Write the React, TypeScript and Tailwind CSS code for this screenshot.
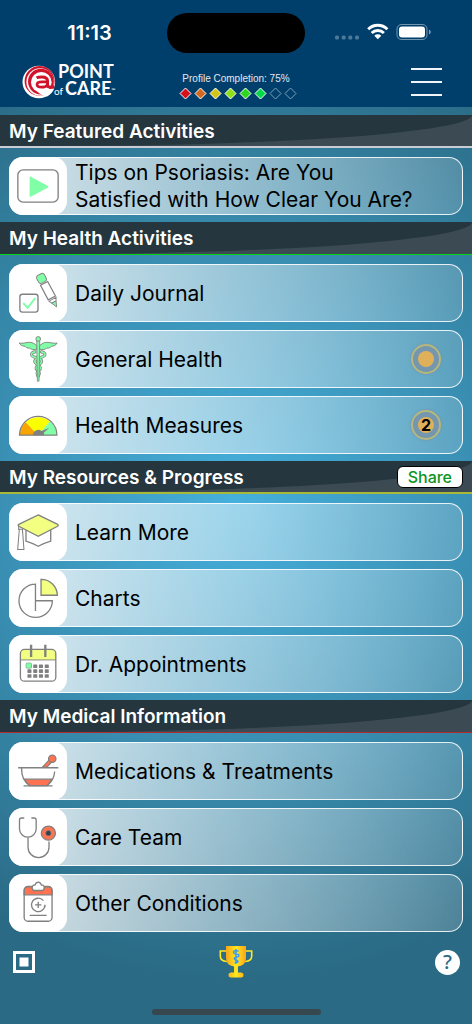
import React from 'react';

type Item = {
	label: string;
	icon: React.ReactNode;
	badge?: string;
};

type Section = {
	title: string;
	line: string;
	share?: boolean;
	items: Item[];
};

const GRAY = '#808080';
const GREEN = '#80ffa6';
const YELLOW = '#f3ff80';
const RED = '#ff7350';

function Icon({ children }: { children: React.ReactNode }) {
	return (
		<svg viewBox="0 0 57 57" className="size-full" fill="none" stroke={GRAY} strokeWidth="1.3" aria-hidden="true">
			{children}
		</svg>
	);
}

const PlayIcon = (
	<Icon>
		<rect x="8.7" y="12.7" width="39.6" height="31.6" rx="5" />
		<path d="M21 20v18.500l17-9.250z" fill={GREEN} stroke={GREEN} strokeWidth="1.500" strokeLinejoin="round" />
	</Icon>
);

const JournalIcon = (
	<Icon>
		<rect x="10.7" y="29.7" width="17.800" height="17.600" rx="2.500" />
		<path d="M14 38.500l4.300 4.500 7.500-9.500" stroke={GREEN} strokeWidth="1.900" />
		<g transform="translate(29.700 10.500) rotate(-28)">
			<rect x="-4" y="0" width="8.500" height="8.500" rx="2.500" fill={GREEN} stroke={GRAY} strokeWidth="0.9" />
			<path d="M-3.800 9.800h8v16.200h-8z" strokeWidth="1.200" />
			<path d="M-3.800 27.500l1.500 3h4.800l1.700-3z" strokeWidth="0.9" />
			<path d="M-2.300 30.500h4.800L.2 36z" fill={GREEN} strokeWidth="0.8" />
		</g>
	</Icon>
);

// snakes are drawn twice: gray outline first, green on top
const SNAKE_LEFT = 'M25.500 21.500c-5 .8-4.500 4.500 1 5.500 5.500 1.300 7.500 3.800 3.300 6.700-3.800 2.500-4.300 4-1.500 6.200 2.200 2 1.800 3.500 0 5.200';
const SNAKE_RIGHT = 'M31.900 21.500c5 .8 4.500 4.500-1 5.500-5.500 1.300-7.500 3.800-3.300 6.700 3.800 2.500 4.300 4 1.500 6.200-2.200 2-1.800 3.500 0 5.200';

const CaduceusIcon = (
	<Icon>
		<g fill={GREEN} strokeWidth="0.9" strokeLinejoin="round">
			<path d="M27.500 18.800c-3 1-5.800.3-7.300-1-2.200.2-3.700-.7-4.500-1.800-2.400-.1-4.500-1-5.600-3.200 3.500.9 6.800-.8 10.400-.7 3.400.1 5 2 7 3.300z" />
			<path d="M29.900 18.800c3 1 5.800.3 7.300-1 2.200.2 3.700-.7 4.500-1.800 2.400-.1 4.500-1 5.600-3.200-3.500.9-6.800-.8-10.400-.7-3.400.1-5 2-7 3.300z" />
		</g>
		<g strokeLinecap="round" strokeLinejoin="round">
			<path d={SNAKE_LEFT} strokeWidth="3" />
			<path d={SNAKE_RIGHT} strokeWidth="3" />
			<path d={SNAKE_LEFT} stroke={GREEN} strokeWidth="1.500" />
			<path d={SNAKE_RIGHT} stroke={GREEN} strokeWidth="1.500" />
		</g>
		<path d="M27.200 10h3l-.7 40.300h-1.600z" fill={GREEN} strokeWidth="0.8" />
		<circle cx="28.700" cy="8.800" r="2.300" fill={GREEN} strokeWidth="0.9" />
	</Icon>
);

const GaugeIcon = (
	<Icon>
		<path d="M28.700 38.500H10.500a18.200 18.200 0 0 1 5.900-12.900z" fill="#faa400" stroke="none" />
		<path d="M28.700 38.500L16.400 25.600a18.200 18.200 0 0 1 23.800-.7z" fill="#faff00" stroke="none" />
		<path d="M28.700 38.500l11.500-13.600a18.200 18.200 0 0 1 6.700 13.600z" fill={GREEN} stroke="none" />
		<path d="M10.300 38.500a18.400 18.400 0 0 1 36.800 0z" strokeWidth="1.200" />
		<path d="M23.500 38.500a5.200 5.200 0 0 1 8.500-4l7.700-3.200-5.500 4.800.4 2.400z" fill={GRAY} stroke="none" />
	</Icon>
);

const GraduationIcon = (
	<Icon>
		<path d="M16.700 25v12.500q5.500 1.700 12 5 6.500-3.300 12.300-5V25" />
		<path d="M28.700 11.700l18.600 9q2.200 1.200 0 2.400l-18.600 9.600-18.600-9.600q-2.200-1.200 0-2.400z" fill={YELLOW} />
		<path d="M9.500 22.500v4M13.300 25.500v4M10.200 25.500L8.500 45.800h6.200L13.200 25.800z" strokeWidth="1" />
	</Icon>
);

const ChartIcon = (
	<Icon>
		<path d="M26 14.800A16.400 16.400 0 1 0 42.600 31.200H26M26 14.200v27" />
		<path d="M31.500 10.200v15.600h16a15.800 15.800 0 0 0-16-15.600z" fill={YELLOW} />
	</Icon>
);

const CalendarIcon = (
	<Icon>
		<path d="M11.200 24.500V18a4 4 0 0 1 4-4h26.700a4 4 0 0 1 4 4v6.500z" fill={YELLOW} stroke="none" />
		<rect x="11.200" y="14.200" width="34.800" height="31.200" rx="4" />
		<path d="M11.200 24.500H46" strokeWidth="0.9" />
		<path d="M21.700 9.500v12M35.700 9.500v12" strokeWidth="2.300" />
		{[30.7, 35.5, 40.3].map((y) =>
			[20, 25.7, 31.3, 37].map((x) => (
				<rect key={`${x}-${y}`} x={x - 1.900} y={y - 1.800} width="4" height="3.600" rx="0.600" fill={GRAY} stroke="none" />
			))
		)}
		<rect x="16.700" y="27.500" width="5.400" height="5.200" rx="1" fill={GREEN} stroke={GRAY} strokeWidth="0.500" />
	</Icon>
);

const MortarIcon = (
	<Icon>
		<path d="M33 24.500l7-7.500 2.500 2.200-5 5.300z" fill={RED} strokeWidth="1" />
		<circle cx="42.500" cy="16.500" r="3.600" fill={RED} />
		<path d="M15.500 36.500h26.600q-2 4-4.500 6.300H20q-3-2.300-4.500-6.300z" fill={RED} />
		<path d="M9 25.300h39.500M12.300 25.500q0 12.500 8 17M44.900 29q-.8 9.500-7.600 13.700M14.300 43.200h28.500" />
	</Icon>
);

const StethoscopeIcon = (
	<Icon>
		<path d="M15 9.800h-2.700q-2 0-2 2v8.700a8.200 8.200 0 0 0 16.400 0v-8.700q0-2-2-2H22" />
		<path d="M18.700 29v9.500a10.300 10.300 0 0 0 20.600 0v-5.700" />
		<circle cx="38.700" cy="24.700" r="6.900" fill={RED} />
		<circle cx="38.700" cy="24.700" r="2.600" fill="#34424a" strokeWidth="0.6" />
	</Icon>
);

const ClipboardIcon = (
	<Icon>
		<path d="M14.900 20.500V16a3.700 3.700 0 0 1 3.700-3.700h20a3.700 3.700 0 0 1 3.700 3.700v4.500z" fill={RED} />
		<rect x="14.900" y="12.400" width="27.400" height="34" rx="3.700" />
		<path d="M24 16.200q-2.500-2.700 0-5.300h1.500q1-2.900 3.200-2.900t3.200 2.900h1.500q2.500 2.600 0 5.300z" fill="#fff" />
		<path d="M33.800 26.200a6.600 6.600 0 1 0 1.500 4.100v2.400M28.700 27.200v6.200M25.600 30.300h6.200M20.300 40.700H37" />
	</Icon>
);

const sections: Section[] = [
	{
		title: 'My Featured Activities',
		line: 'border-b-2 border-[#c9ccd4]',
		items: [{ label: 'Tips on Psoriasis: Are You Satisfied with How Clear You Are?', icon: PlayIcon }],
	},
	{
		title: 'My Health Activities',
		line: 'border-b border-[#00d414]',
		items: [
			{ label: 'Daily Journal', icon: JournalIcon },
			{ label: 'General Health', icon: CaduceusIcon, badge: '' },
			{ label: 'Health Measures', icon: GaugeIcon, badge: '2' },
		],
	},
	{
		title: 'My Resources & Progress',
		line: 'border-b-2 border-[#a9b838]',
		share: true,
		items: [
			{ label: 'Learn More', icon: GraduationIcon },
			{ label: 'Charts', icon: ChartIcon },
			{ label: 'Dr. Appointments', icon: CalendarIcon },
		],
	},
	{
		title: 'My Medical Information',
		line: 'border-b border-[#b02c30]',
		items: [
			{ label: 'Medications & Treatments', icon: MortarIcon },
			{ label: 'Care Team', icon: StethoscopeIcon },
			{ label: 'Other Conditions', icon: ClipboardIcon },
		],
	},
];

// six steps done, two left
const steps = ['#d8101c', '#d2691e', '#d4c414', '#8ee014', '#2cd81c', '#00d848', 'none', 'none'];

function StatusBar() {
	return (
		<div className="grid grid-cols-[1fr_auto_1fr] items-center pt-[13px]">
			<div className="pl-3 text-center text-[20px] font-semibold">11:13</div>
			<div className="h-10 w-[138px] rounded-full bg-black" />
			<svg viewBox="0 0 100 20" className="ml-7 h-5 w-[100px]" aria-hidden="true">
				<g fill="#fff" opacity="0.3">
					<rect x="2" y="12.500" width="4" height="4" rx="1.500" />
					<rect x="8.700" y="12.500" width="4" height="4" rx="1.500" />
					<rect x="15.300" y="12.500" width="4" height="4" rx="1.500" />
					<rect x="22" y="12.500" width="4" height="4" rx="1.500" />
				</g>
				<g stroke="#fff" fill="none" strokeWidth="2.900">
					<path d="M35.200 6.200a13.700 13.700 0 0 1 19.200 0" />
					<path d="M38.700 10a8.700 8.700 0 0 1 12.200 0" />
				</g>
				<path d="M41.300 12.800a4.900 4.900 0 0 1 7 0l-3.500 3.500z" fill="#fff" />
				<rect x="64" y="1.500" width="30" height="15" rx="4.500" fill="none" stroke="#fff" opacity="0.45" />
				<rect x="66" y="3.500" width="26" height="11" rx="3" fill="#fff" />
				<path d="M96 6.700v4.600q1.800-.6 1.800-2.300T96 6.700z" fill="#fff" opacity="0.5" />
			</svg>
		</div>
	);
}

function Logo() {
	return (
		<a href="#" aria-label="@Point of Care" className="flex items-center">
			<svg viewBox="0 0 34 34" className="size-[34px] shrink-0" aria-hidden="true">
				<circle cx="16.800" cy="17" r="16.300" fill="#fff" />
				<circle cx="17.600" cy="16" r="15" fill="#d0142c" />
				<circle cx="18.100" cy="17" r="13.700" fill="#fff" />
				<circle cx="18.900" cy="16.600" r="12.900" fill="#d0142c" />
				<circle cx="19.300" cy="17.300" r="10.300" fill="#fff" />
				<path d="M22 24h10q-2 5-7 7.500-5-1-9-4z" fill="#fff" />
				<g fill="none" stroke="#d0142c">
					<path d="M14.500 12.800q1.500-.8 5.500-.8 5.500 0 5.500 4v4q0 2 2.300 2h4.500" strokeWidth="3" />
					<path d="M25 16.900h-5q-5 0-5 2.600 0 2.700 4.500 2.700 4.500 0 6-2.500" strokeWidth="2.700" />
				</g>
			</svg>
			<span className="flex flex-col font-['Lato',sans-serif] text-[18px] leading-[17px] font-bold">
				<span className="pl-[2px]">POINT</span>
				<span className="flex items-baseline">
					<span className="-ml-[2px] text-[10px] font-normal">of</span>
					<span className="pl-[2px]">CARE</span>
					<span className="self-center text-[5px] leading-none">™</span>
				</span>
			</span>
		</a>
	);
}

function Header() {
	return (
		<header className="bg-[#003f6b] text-white">
			<StatusBar />
			<div className="grid grid-cols-[1fr_auto_1fr] items-center px-[22px] pt-[10px] pb-[7px]">
				<Logo />
				<div className="flex flex-col items-center gap-[2px] pt-[10px] font-['Liberation_Sans',sans-serif]">
					<p className="text-[10px] leading-3 text-slate-200">Profile Completion: 75%</p>
					<div className="flex gap-[2px] pl-1">
						{steps.map((fill, i) => (
							<svg key={i} viewBox="0 0 13 13" className="size-[13px]" aria-hidden="true">
								<path d="M6.500 1l5.500 5.500-5.500 5.500L1 6.500z" fill={fill} stroke={fill === 'none' ? '#7f9fb8' : '#fff'} />
							</svg>
						))}
					</div>
				</div>
				<button aria-label="Menu" className="mr-2 flex flex-col gap-[11px] justify-self-end">
					<span className="h-[2px] w-[31px] bg-slate-100" />
					<span className="h-[2px] w-[31px] bg-slate-100" />
					<span className="h-[2px] w-[31px] bg-slate-100" />
				</button>
			</div>
		</header>
	);
}

function SectionBar({ title, line, share }: Omit<Section, 'items'>) {
	return (
		<div className={`relative flex h-[33px] items-center justify-between bg-[#3c4b53] px-[9px] ${line}`}>
			<div className="absolute inset-0 rounded-br-[90%_100%] bg-[#25363e]" />
			<h2 className="relative pt-[2px] text-[19px] leading-6 font-semibold text-white">{title}</h2>
			{share && (
				<button className="relative h-[22px] rounded-md border border-black bg-white px-[10px] text-[16px] leading-5 font-medium text-[#0c9420]">
					Share
				</button>
			)}
		</div>
	);
}

function Badge({ text }: { text: string }) {
	return (
		<span className="mr-[21px] flex size-[30px] shrink-0 items-center justify-center rounded-full border-2 border-[#b4b87c] bg-[#7496ae] shadow-[0_0_3px_#7a8fa8]">
			<span className="flex size-4 items-center justify-center rounded-full bg-[#dfb05a] text-[16px] font-bold text-black">{text}</span>
		</span>
	);
}

function ItemCard({ item }: { item: Item }) {
	return (
		<button className="flex h-[58px] w-full items-center rounded-[14px] border border-white/85 bg-[linear-gradient(97deg,rgba(255,255,255,0.73)_12%,rgba(255,255,255,0.48)_50%,rgba(255,255,255,0.17)_100%)] text-left">
			<span className="-my-px -ml-px size-[58px] shrink-0 rounded-[14px] bg-white">{item.icon}</span>
			<span className="flex-1 pr-10 pl-2 text-[21px] leading-[27px] text-black">{item.label}</span>
			{item.badge !== undefined && <Badge text={item.badge} />}
		</button>
	);
}

function Footer() {
	return (
		<footer className="grid grid-cols-3 items-center px-3 pt-[6px]">
			<button aria-label="Expand" className="size-6 justify-self-start">
				<svg viewBox="0 0 24 24" fill="none" aria-hidden="true">
					<rect x="2.500" y="2.500" width="19" height="19" stroke="#fff" strokeWidth="3" />
					<rect x="7.500" y="7.500" width="9" height="9" fill="#fff" />
				</svg>
			</button>
			<button aria-label="Awards" className="h-[34px] w-9 justify-self-center">
				<svg viewBox="0 0 36 34" fill="none" aria-hidden="true">
					<defs>
						<linearGradient id="gold">
							<stop offset="0" stopColor="#fba31c" />
							<stop offset="0.5" stopColor="#ffe81c" />
							<stop offset="1" stopColor="#fba31c" />
						</linearGradient>
					</defs>
					<path d="M8 6H2.300v5q0 5 6.500 5.500M28 6h5.700v5q0 5-6.500 5.500" stroke="#ffe81c" strokeWidth="1.600" />
					<path d="M8 1h20v12q0 7.500-8 8.500v6h3q2.500 0 2.500 2.500 0 2.500-2.500 2.500H13q-2.500 0-2.500-2.500 0-2.500 2.500-2.500h3v-6q-8-1-8-8.500z" fill="url(#gold)" />
					<path d="M18 4v15M20.500 6q-5-1-5 1t5 2.500q1.500 2-2.500 2.700-3 .8-1 2.500 3 .5 3 2-.5 1.300-3.500.8" stroke="#3c9cf0" strokeWidth="1.500" />
				</svg>
			</button>
			<button aria-label="Help" className="flex size-[25px] items-center justify-center justify-self-end rounded-full bg-white font-['Noto_Sans',sans-serif] text-[20px] leading-none font-medium text-[#2b6b85]">
				?
			</button>
		</footer>
	);
}

export default function App() {
	return (
		<div className="flex min-h-screen flex-col font-['Inter',sans-serif]">
			<Header />
			<main className="flex flex-1 flex-col bg-[radial-gradient(circle_480px_at_50%_43%,#45b0dc_0%,#3a91b5_48%,#2a6a84_100%)] pt-2">
				{sections.map((section) => (
					<section key={section.title}>
						<SectionBar title={section.title} line={section.line} share={section.share} />
						<div className="flex flex-col gap-2 px-[9px] pt-[9px] pb-[7px]">
							{section.items.map((item) => (
								<ItemCard key={item.label} item={item} />
							))}
						</div>
					</section>
				))}
				<Footer />
				<div className="mx-auto mt-auto mb-[9px] h-[6px] w-[169px] rounded-full bg-[#36474f]" />
			</main>
		</div>
	);
}
